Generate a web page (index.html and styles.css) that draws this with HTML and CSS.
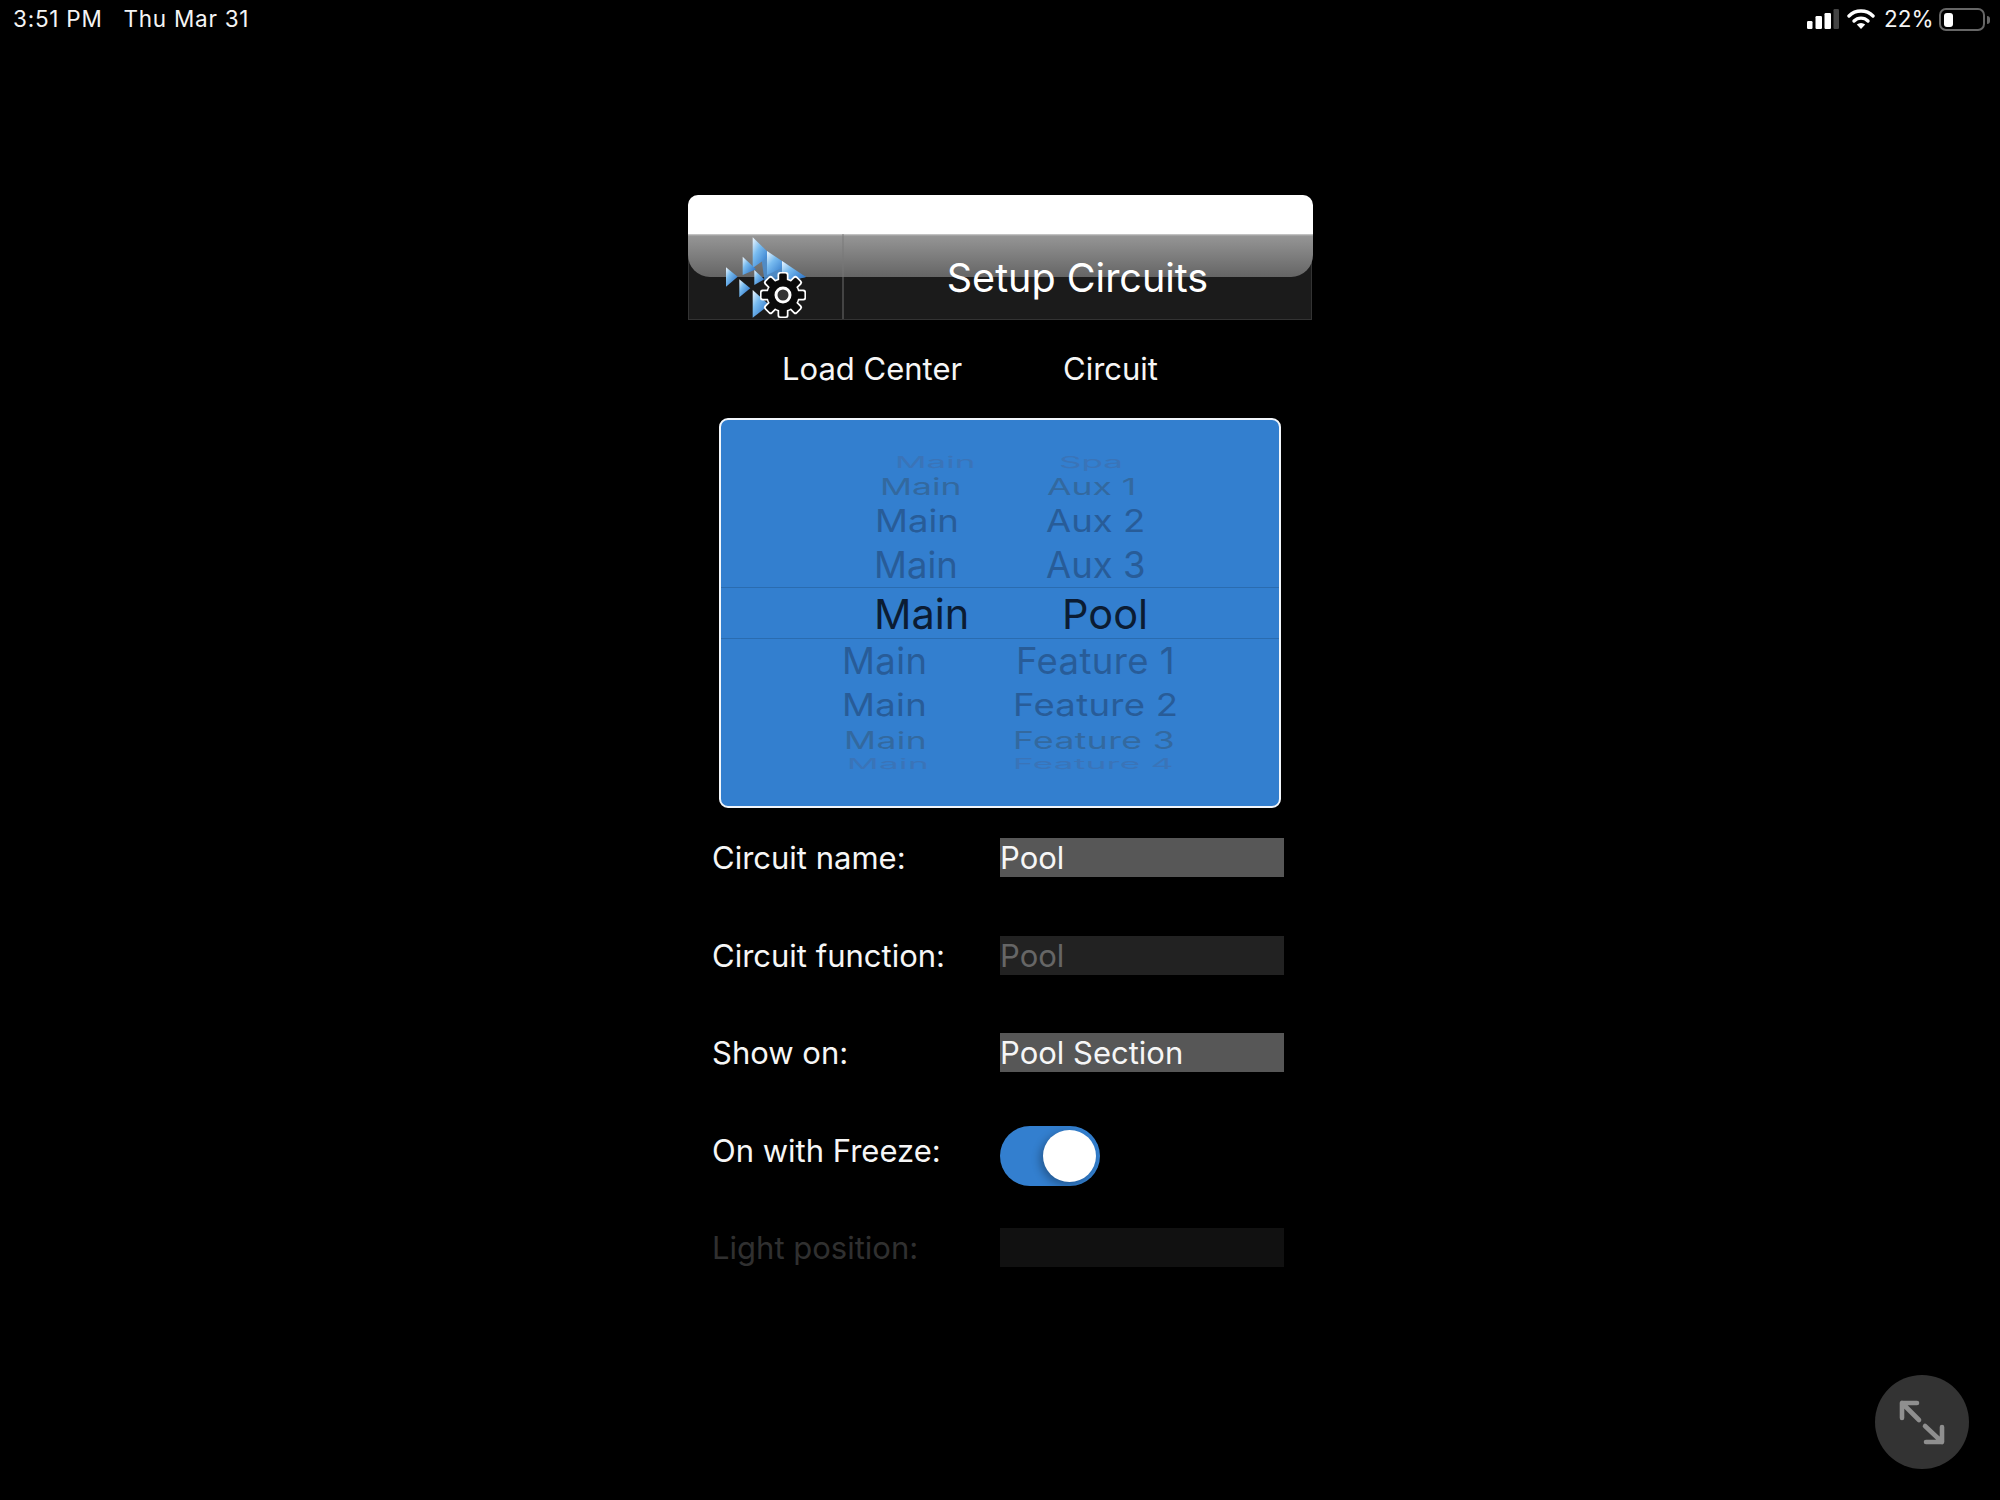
FILE: index.html
```html
<!DOCTYPE html>
<html lang="en">
<head>
<meta charset="utf-8">
<title>Setup Circuits</title>
<link rel="stylesheet" href="styles.css">
</head>
<body>
<div class="status">
  <div class="status-left"><span>3:51 PM</span><span>Thu Mar 31</span></div>
  <div class="status-right">
    <svg class="signal" width="32" height="20" viewBox="0 0 32 20"><rect x="0" y="12" width="5.5" height="8" rx="1.2" fill="#fff"/><rect x="8.5" y="7" width="6.5" height="13" rx="1.2" fill="#fff"/><rect x="17.5" y="4" width="6.5" height="16" rx="1.2" fill="#fff"/><rect x="26.5" y="0" width="5.5" height="20" rx="1.2" fill="#444"/></svg>
    <svg class="wifi" width="28" height="21" viewBox="0 0 28 21"><path d="M2 8 A17 17 0 0 1 26 8" fill="none" stroke="#fff" stroke-width="3.4" stroke-linecap="round"/><path d="M7 13 A10 10 0 0 1 21 13" fill="none" stroke="#fff" stroke-width="3.4" stroke-linecap="round"/><path d="M14 21 L9.8 16.6 A6 6 0 0 1 18.2 16.6 Z" fill="#fff"/></svg>
    <span class="pct">22%</span>
    <div class="battery"><div class="battery-level"></div></div>
    <div class="battery-nub"></div>
  </div>
</div>

<main class="screen">
  <header class="titlebar">
    <div class="gloss"></div>
    <div class="logo-cell">
      <svg class="logo" width="100" height="88" viewBox="0 0 100 88">
        <defs>
          <linearGradient id="fin" x1="0" y1="0" x2="1" y2="1">
            <stop offset="0" stop-color="#f2f9ff"/>
            <stop offset="0.35" stop-color="#79bcf0"/>
            <stop offset="1" stop-color="#1a62bd"/>
          </linearGradient>
          <rect id="tooth-w" x="-5.5" y="-23" width="11" height="12" rx="2.5"/>
          <rect id="tooth-b" x="-3.8" y="-21.4" width="7.6" height="12" rx="1.5"/>
        </defs>
        <path d="M46 20 L91 42 L50 50 Z" fill="#4a8fd4" opacity=".85"/>
        <path d="M37.7 2.3 L56 20 L37.7 33 Z" fill="url(#fin)"/>
        <path d="M52 16 L73 30 L52 40 Z" fill="url(#fin)"/>
        <path d="M67 26 L91 42 L67 48 Z" fill="url(#fin)"/>
        <path d="M27.7 21.7 L41 34.3 L27.7 40 Z" fill="url(#fin)"/>
        <path d="M11 32.3 L22.7 41.7 L11 51.7 Z" fill="url(#fin)"/>
        <path d="M39.3 35 L49.3 44.3 L39.3 50 Z" fill="url(#fin)"/>
        <path d="M24.3 44.3 L35.3 53.3 L24.3 62.3 Z" fill="url(#fin)"/>
        <path d="M37.7 55 L54.3 70 L37.7 82.7 Z" fill="url(#fin)"/>
        <g transform="translate(68 60)">
          <g fill="#fff">
            <circle r="17"/>
            <use href="#tooth-w"/><use href="#tooth-w" transform="rotate(45)"/><use href="#tooth-w" transform="rotate(90)"/><use href="#tooth-w" transform="rotate(135)"/><use href="#tooth-w" transform="rotate(180)"/><use href="#tooth-w" transform="rotate(225)"/><use href="#tooth-w" transform="rotate(270)"/><use href="#tooth-w" transform="rotate(315)"/>
          </g>
          <g fill="#0a0a0a">
            <circle r="15.5"/>
            <use href="#tooth-b"/><use href="#tooth-b" transform="rotate(45)"/><use href="#tooth-b" transform="rotate(90)"/><use href="#tooth-b" transform="rotate(135)"/><use href="#tooth-b" transform="rotate(180)"/><use href="#tooth-b" transform="rotate(225)"/><use href="#tooth-b" transform="rotate(270)"/><use href="#tooth-b" transform="rotate(315)"/>
          </g>
          <circle r="7" fill="#333" stroke="#fff" stroke-width="3"/>
        </g>
      </svg>
    </div>
    <h1 class="title">Setup Circuits</h1>
  </header>

  <div class="columns"><span class="col-a">Load Center</span><span class="col-b">Circuit</span></div>

  <div class="picker">
    <div class="wheel r1"><span>Main</span><span>Spa</span></div>
    <div class="wheel r2"><span>Main</span><span>Aux 1</span></div>
    <div class="wheel r3"><span>Main</span><span>Aux 2</span></div>
    <div class="wheel r4"><span>Main</span><span>Aux 3</span></div>
    <div class="wheel sel"><span>Main</span><span>Pool</span></div>
    <div class="wheel r6"><span>Main</span><span>Feature 1</span></div>
    <div class="wheel r7"><span>Main</span><span>Feature 2</span></div>
    <div class="wheel r8"><span>Main</span><span>Feature 3</span></div>
    <div class="wheel r9"><span>Main</span><span>Feature 4</span></div>
  </div>

  <div class="form">
    <div class="row"><span class="label">Circuit name:</span><div class="field">Pool</div></div>
    <div class="row"><span class="label">Circuit function:</span><div class="field field-off">Pool</div></div>
    <div class="row"><span class="label">Show on:</span><div class="field">Pool Section</div></div>
    <div class="row"><span class="label">On with Freeze:</span><div class="toggle"><div class="thumb"></div></div></div>
    <div class="row"><span class="label label-off">Light position:</span><div class="field field-dim"></div></div>
  </div>
</main>

<div class="expand">
  <svg width="94" height="94" viewBox="0 0 94 94" fill="none" stroke="#8f8f8f" stroke-width="4.6" stroke-linecap="round" stroke-linejoin="round">
    <path d="M42 28 H27 V43 M27 28 L44 45"/>
    <path d="M51 67 H67 V52 M67 67 L50 51"/>
  </svg>
</div>
</body>
</html>
```

FILE: styles.css
```css
* { box-sizing: border-box; }
html, body { margin: 0; padding: 0; }
body {
  background: #000;
  color: #fff;
  font-family: Inter, Roboto, "Liberation Sans", sans-serif;
  height: 1500px;
  overflow: hidden;
  position: relative;
}

/* status bar */
.status {
  height: 40px;
  display: flex;
  justify-content: space-between;
  padding: 0 10px 0 13px;
  font-size: 22.5px;
  color: #f4f4f4;
}
.status-left { display: flex; gap: 21px; line-height: 38px; letter-spacing: .75px; }
.status-right { display: flex; align-items: flex-start; position: relative; line-height: 38px; }
.signal { margin-top: 9px; margin-right: 8px; }
.wifi { margin-top: 8px; margin-right: 9px; }
.pct { width: 55px; }
.battery {
  width: 46px;
  height: 23px;
  margin-top: 8px;
  border: 2px solid #666;
  border-radius: 7px;
  padding: 2.5px;
}
.battery-level { width: 9px; height: 14px; background: #fff; border-radius: 3px; }
.battery-nub { width: 3px; height: 8px; margin: 16px 0 0 2px; background: #666; border-radius: 0 3px 3px 0; }

/* column */
.screen { width: 624px; margin: 155px auto 0; }

.titlebar {
  position: relative;
  height: 125px;
  padding-top: 39px;
  display: flex;
  background: #1b1b1b;
  border: 1.5px solid #333;
  border-top: 0;
  border-radius: 10px 10px 0 0;
}
.gloss {
  position: absolute;
  top: 0;
  left: -1.5px;
  right: -1.5px;
  height: 82px;
  border-radius: 10px 10px 22px 22px;
  background: linear-gradient(#fff 0, #fff 39px, #d0d0d0 39px, #959595 41px, #656565 100%);
}
.logo-cell { position: relative; width: 153px; }
.logo { position: absolute; left: 26px; top: 1px; }
.title {
  position: relative;
  flex: 1;
  margin: 0;
  border-left: 2px solid rgba(120, 120, 120, .45);
  font-size: 39.5px;
  font-weight: 400;
  line-height: 88px;
  text-align: center;
  color: #fff;
}

.columns {
  height: 98px;
  display: flex;
  padding-left: 94px;
  font-size: 31px;
  line-height: 98px;
  color: #f6f6f6;
}
.col-a { width: 281px; }

/* picker */
.picker {
  width: 562px;
  height: 390px;
  margin: 0 auto;
  padding-top: 30px;
  background: #337fcf;
  border: 2px solid #f2f6fb;
  border-radius: 9px;
}
.wheel {
  display: grid;
  grid-template-rows: minmax(0, 1fr);
  align-items: center;
  color: #285c98;
  font-size: 36.5px;
}
.wheel span { display: block; white-space: nowrap; line-height: 1; }
.r1 { height: 24px; padding-left: 174px; grid-template-columns: 164px auto; color: #3a74b8; font-size: 35px; }
.r1 span { transform: scaleY(.45); }
.r2 { height: 25px; padding-left: 159px; grid-template-columns: 167px auto; color: #33699f; font-size: 35.5px; }
.r2 span { transform: scaleY(.64); }
.r3 { height: 45px; padding-left: 154px; grid-template-columns: 171px auto; }
.r3 span { transform: scaleY(.86); }
.r4 { height: 43px; padding-left: 153px; grid-template-columns: 172px auto; }
.sel {
  height: 52px;
  padding-left: 153px;
  grid-template-columns: 188px auto;
  color: #0b1c33;
  font-size: 41.5px;
  border-top: 1.5px solid #2a6cb0;
  border-bottom: 1.5px solid #2a6cb0;
}
.sel span { padding-top: 3px; }
.r6 { height: 45px; padding-left: 121px; grid-template-columns: 174px auto; letter-spacing: .4px; }
.r7 { height: 43px; padding-left: 121px; grid-template-columns: 171px auto; letter-spacing: .3px; }
.r7 span { transform: scaleY(.86); }
.r8 { height: 27px; padding-left: 123px; grid-template-columns: 169px auto; color: #33699f; font-size: 35.5px; letter-spacing: .4px; }
.r8 span { transform: scaleY(.67); }
.r9 { height: 19px; padding-left: 126px; grid-template-columns: 166px auto; color: #3a74b8; font-size: 35px; letter-spacing: .4px; }
.r9 span { transform: scaleY(.42); }

/* form */
.form {
  margin: 30px 0 0 24px;
  display: flex;
  flex-direction: column;
  gap: 58.6px;
}
.row { height: 39px; display: grid; grid-template-columns: 288px 284px; font-size: 31px; line-height: 39px; }
.label { color: #f6f6f6; white-space: nowrap; }
.label-off { color: #303030; }
.field { height: 39px; background: #575757; color: #f6f6f6; }
.field-off { background: #222; color: #666; }
.field-dim { background: #111; }

.toggle {
  width: 100px;
  height: 60px;
  margin-top: -5px;
  padding: 4px 4px 4px 0;
  display: flex;
  justify-content: flex-end;
  background: #337fcf;
  border-radius: 30px;
}
.thumb {
  width: 53px;
  height: 52px;
  background: #fff;
  border-radius: 50%;
  box-shadow: -3px 3px 8px rgba(0, 0, 0, .3);
}

/* floating button */
.expand {
  position: absolute;
  left: 1875px;
  top: 1375px;
  width: 94px;
  height: 94px;
  border-radius: 50%;
  background: #333;
}
.expand svg { display: block; }
```
